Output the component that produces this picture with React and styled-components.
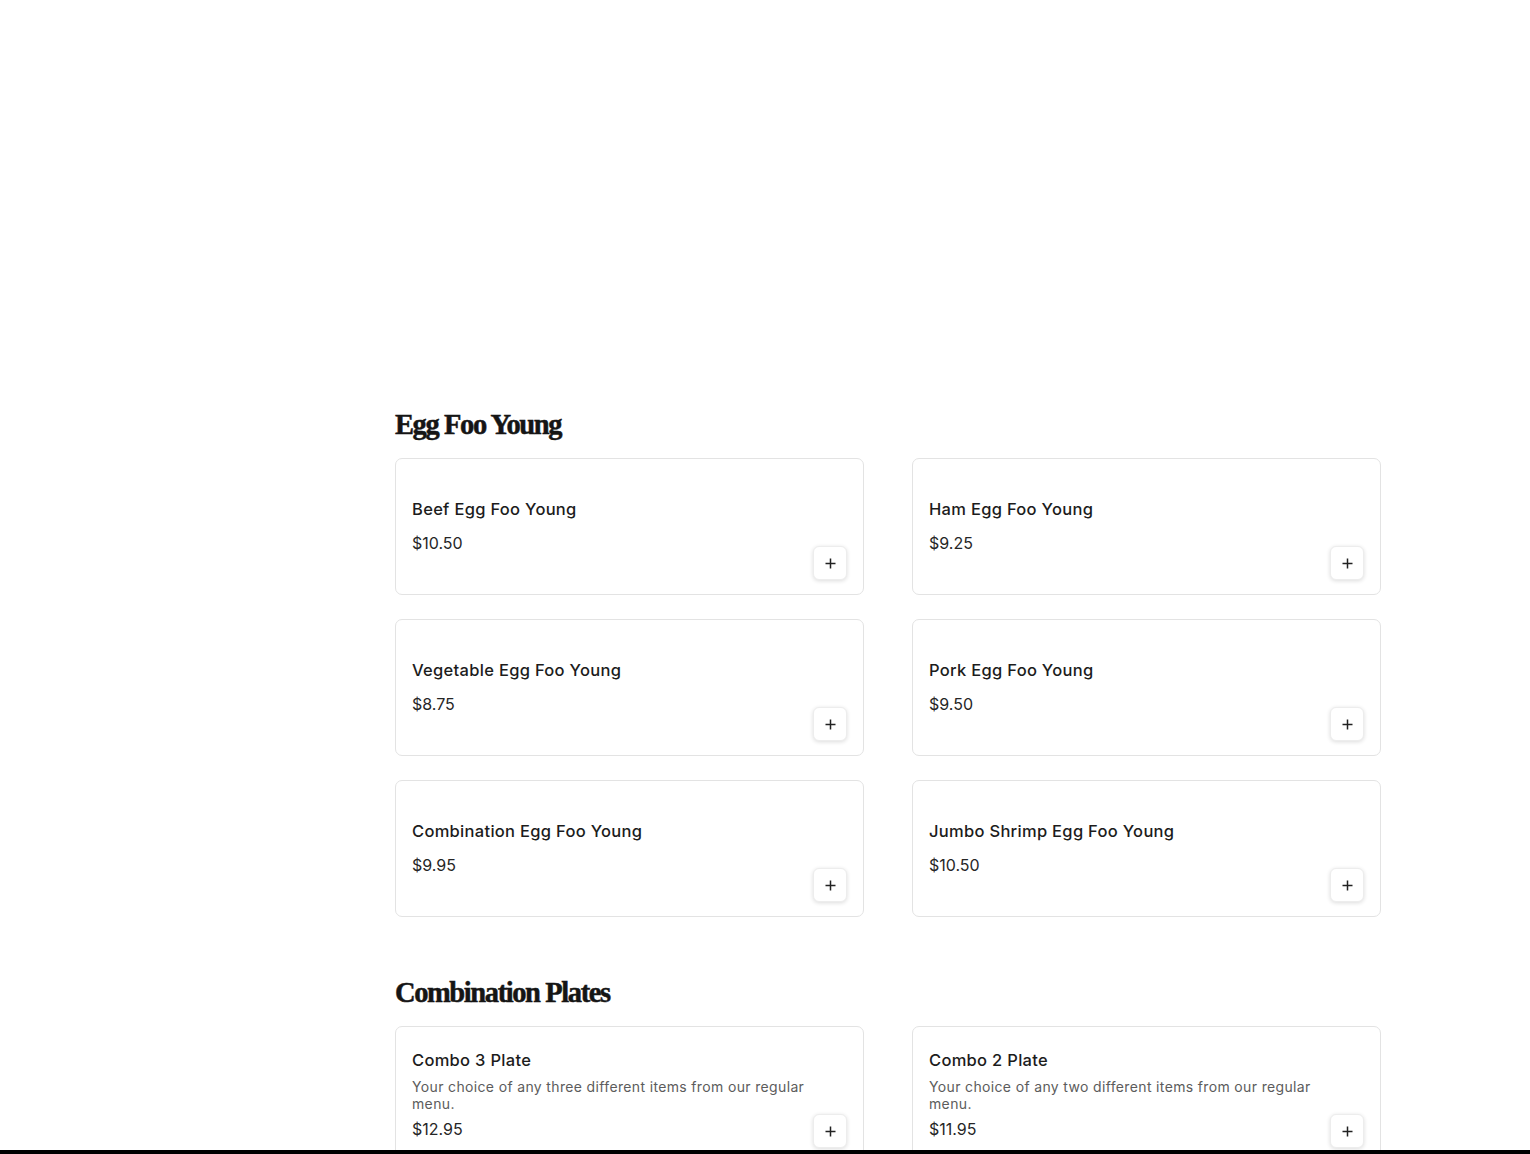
import React from "react";
import styled, { createGlobalStyle } from "styled-components";

const GlobalStyle = createGlobalStyle`
  html { scrollbar-width: none; }
  html::-webkit-scrollbar { display: none; }
  body {
    margin: 0;
    background: #ffffff;
    font-family: Inter, "Noto Sans", sans-serif;
    color: #1a1a1a;
  }
  * { box-sizing: border-box; }
`;

const Page = styled.div`
  display: grid;
  grid-template-columns: 347px 1fr;
  column-gap: 48px;
  padding: 0 149px 0 0;
`;

const Aside = styled.aside`
  min-height: 1px;
`;

const Main = styled.main`
  display: flex;
  flex-direction: column;
  padding-top: 407px;
`;

const Section = styled.section`
  display: flex;
  flex-direction: column;
  & + & {
    margin-top: 58px;
  }
`;

const SectionTitle = styled.h2`
  margin: 0 0 15px;
  font-family: "Liberation Serif", "DejaVu Serif", serif;
  font-weight: 900;
  font-size: 28.5px;
  line-height: 36px;
  letter-spacing: -1.4px;
  color: #151515;
  -webkit-text-stroke: 0.5px #151515;
`;

const Grid = styled.div`
  display: grid;
  grid-template-columns: 1fr 1fr;
  column-gap: 48px;
  row-gap: 24px;
`;

const Card = styled.div`
  display: flex;
  min-height: 137px;
  padding: 16px 16px 14px;
  border: 1px solid #e3e3e3;
  border-radius: 7px;
  background: #fff;
`;

const Info = styled.div`
  flex: 1;
  display: flex;
  flex-direction: column;
  justify-content: center;
  min-width: 0;
  padding-bottom: 3px;
`;

const ItemName = styled.div`
  font-size: 16.5px;
  font-weight: 500;
  line-height: 24px;
  letter-spacing: 0.3px;
  color: #1c1c1c;
`;

const Desc = styled.div`
  margin-top: 6px;
  font-size: 14px;
  line-height: 17px;
  letter-spacing: 0.35px;
  color: #5c5c5c;
`;

const Price = styled.div`
  margin-top: ${(p) => (p.$afterDesc ? "5px" : "10px")};
  font-size: 16px;
  line-height: 24px;
  color: #262626;
`;

const AddButton = styled.button`
  align-self: flex-end;
  flex: none;
  width: 34px;
  height: 34px;
  display: flex;
  align-items: center;
  justify-content: center;
  padding: 0;
  border: 1px solid #ededed;
  border-radius: 6px;
  background: #fff;
  box-shadow: 0 1px 4px rgba(0, 0, 0, 0.14);
  cursor: pointer;
`;

const BottomBar = styled.div`
  position: fixed;
  left: 0;
  right: 0;
  bottom: 0;
  height: 4px;
  background: #000;
`;

const PlusIcon = () => (
  <svg width="11" height="11" viewBox="0 0 11 11" aria-hidden="true">
    <path d="M5.5 0.5v10M0.5 5.5h10" stroke="#222" strokeWidth="1.5" fill="none" />
  </svg>
);

const sections = [
  {
    title: "Egg Foo Young",
    items: [
      { name: "Beef Egg Foo Young", price: "$10.50" },
      { name: "Ham Egg Foo Young", price: "$9.25" },
      { name: "Vegetable Egg Foo Young", price: "$8.75" },
      { name: "Pork Egg Foo Young", price: "$9.50" },
      { name: "Combination Egg Foo Young", price: "$9.95" },
      { name: "Jumbo Shrimp Egg Foo Young", price: "$10.50" },
    ],
  },
  {
    title: "Combination Plates",
    items: [
      {
        name: "Combo 3 Plate",
        desc: "Your choice of any three different items from our regular menu.",
        price: "$12.95",
      },
      {
        name: "Combo 2 Plate",
        desc: "Your choice of any two different items from our regular menu.",
        price: "$11.95",
      },
    ],
  },
];

const MenuCard = ({ item }) => (
  <Card>
    <Info>
      <ItemName>{item.name}</ItemName>
      {item.desc && <Desc>{item.desc}</Desc>}
      <Price $afterDesc={!!item.desc}>{item.price}</Price>
    </Info>
    <AddButton aria-label={`Add ${item.name}`}>
      <PlusIcon />
    </AddButton>
  </Card>
);

export default function App() {
  return (
    <>
      <GlobalStyle />
      <Page>
        <Aside />
        <Main>
          {sections.map((s) => (
            <Section key={s.title}>
              <SectionTitle>{s.title}</SectionTitle>
              <Grid>
                {s.items.map((it) => (
                  <MenuCard key={it.name} item={it} />
                ))}
              </Grid>
            </Section>
          ))}
        </Main>
      </Page>
      <BottomBar />
    </>
  );
}
